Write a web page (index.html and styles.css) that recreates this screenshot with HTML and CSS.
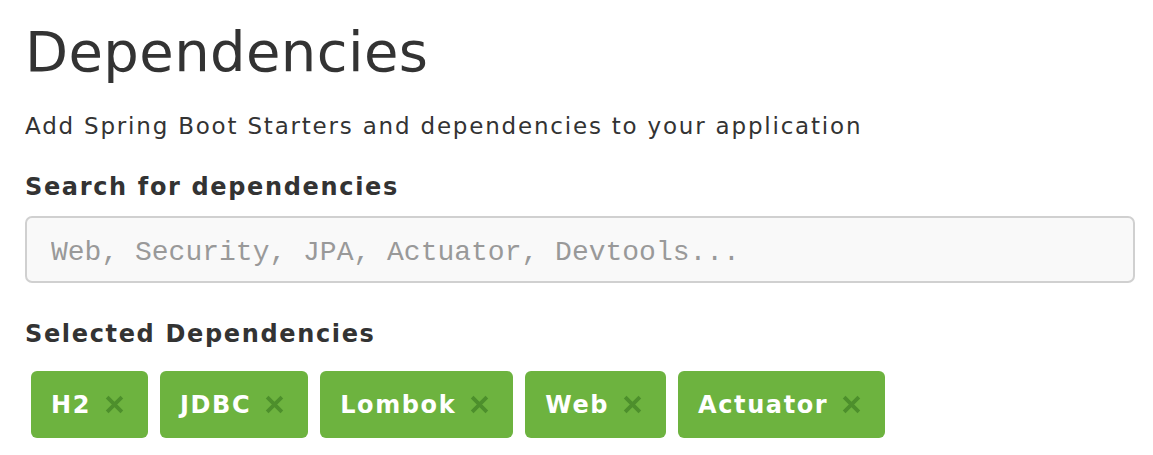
FILE: index.html
```html
<!DOCTYPE html>
<html lang="en">
<head>
<meta charset="utf-8">
<title>Dependencies</title>
<link rel="stylesheet" href="styles.css">
</head>
<body>
<main class="panel">
  <h1 class="title">Dependencies</h1>
  <p class="subtitle">Add Spring Boot Starters and dependencies to your application</p>
  <label class="label search-label" for="search">Search for dependencies</label>
  <input class="search" id="search" type="text" placeholder="Web, Security, JPA, Actuator, Devtools...">
  <h2 class="label selected-label">Selected Dependencies</h2>
  <div class="tags">
    <span class="tag">H2<svg class="x" viewBox="0 0 20 18" aria-hidden="true"><path d="M3 2 L17 16 M17 2 L3 16"/></svg></span>
    <span class="tag">JDBC<svg class="x" viewBox="0 0 20 18" aria-hidden="true"><path d="M3 2 L17 16 M17 2 L3 16"/></svg></span>
    <span class="tag">Lombok<svg class="x" viewBox="0 0 20 18" aria-hidden="true"><path d="M3 2 L17 16 M17 2 L3 16"/></svg></span>
    <span class="tag">Web<svg class="x" viewBox="0 0 20 18" aria-hidden="true"><path d="M3 2 L17 16 M17 2 L3 16"/></svg></span>
    <span class="tag">Actuator<svg class="x" viewBox="0 0 20 18" aria-hidden="true"><path d="M3 2 L17 16 M17 2 L3 16"/></svg></span>
  </div>
</main>
</body>
</html>
```
FILE: styles.css
```css
html, body { margin: 0; padding: 0; background: #fff; }
body { font-family: "DejaVu Sans", "Open Sans", sans-serif; color: #333; }
.panel { padding: 12px 19px 0 25px; display: flex; flex-direction: column; align-items: flex-start; }
.title { font-size: 56px; font-weight: 400; margin: 0; line-height: 80px; color: #333; letter-spacing: 0.4px; }
.subtitle { font-size: 23px; margin: 0; line-height: 36px; margin-top: 16px; letter-spacing: 1.8px; }
.label { display: block; font-size: 24px; font-weight: 700; margin: 0; line-height: 34px; color: #333; letter-spacing: 1.65px; }
.search-label { margin-top: 26px; }
.search { box-sizing: border-box; width: 1110px; height: 67px; margin-top: 12px; border: 2px solid #d0d0d0; border-radius: 7px; background: #f9f9f9; padding: 6px 0 0 24px; font-family: "Liberation Mono", monospace; font-size: 28px; color: #333; outline: none; }
.search::placeholder { color: #999; }
.selected-label { margin-top: 34px; }
.tags { display: flex; gap: 12px; margin-top: 20px; padding-left: 6px; }
.tag { display: inline-flex; align-items: center; height: 67px; box-sizing: border-box; padding: 0 23px 0 20px; background: #6db33f; color: #fff; font-size: 24px; font-weight: 700; border-radius: 6px; letter-spacing: 1.6px; }
.x { width: 21px; height: 19px; margin-left: 13px; fill: none; stroke: #4d8f2c; stroke-width: 3.6; }
```
